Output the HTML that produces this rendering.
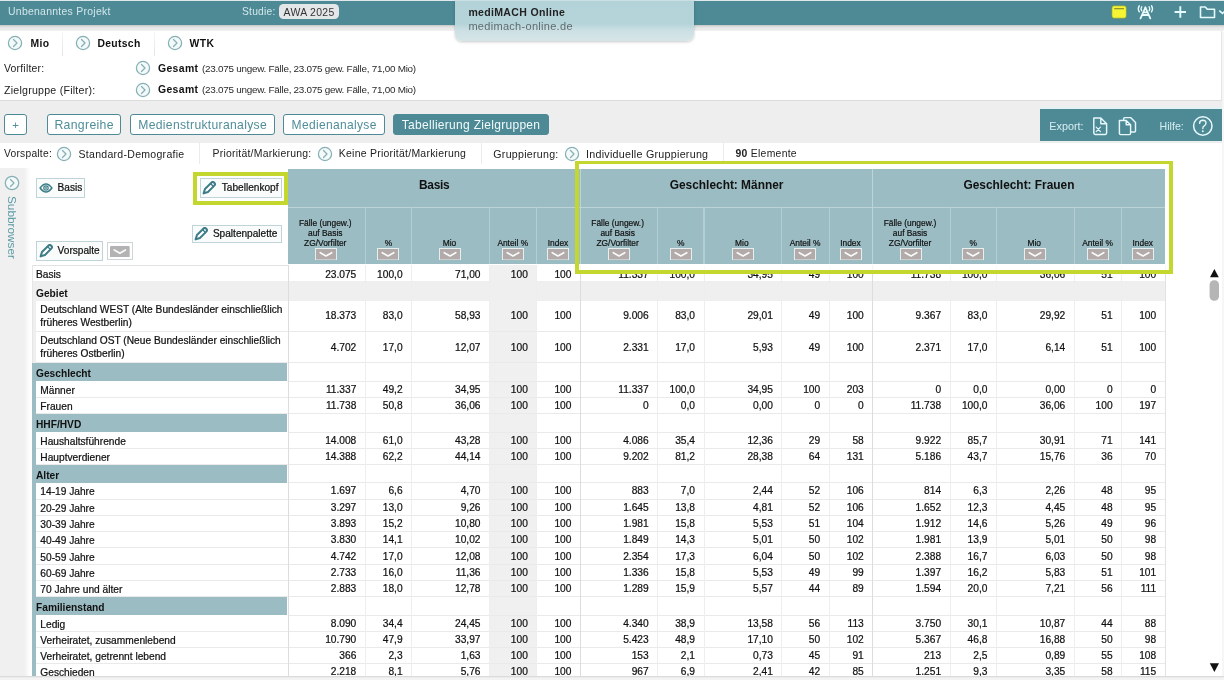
<!DOCTYPE html>
<html lang="de"><head><meta charset="utf-8"><title>mediMACH Online</title>
<style>
html,body{margin:0;padding:0}
body{width:1224px;height:680px;overflow:hidden;position:relative;background:#fff;font-family:"Liberation Sans",sans-serif;color:#222}
.abs{position:absolute}
.t{white-space:nowrap}
.btn{position:absolute;box-sizing:border-box;border:1px solid #4d8a96;border-radius:3px;background:#fff;color:#4f8e99;font-size:12.7px;text-align:center;white-space:nowrap}
.sbtn{position:absolute;box-sizing:border-box;border:1px solid #bfd4d8;background:#fafcfc}
.row{position:absolute;left:0;width:1224px}
.c{position:absolute;top:0;height:100%;text-align:right;font-size:10.2px;white-space:nowrap;color:#111;-webkit-text-stroke:0.22px #111}
.lab{position:absolute;top:0;height:100%;font-size:10.2px;white-space:nowrap;color:#111;-webkit-text-stroke:0.22px #111}
.vl{position:absolute;width:1px;background:#ededed}
.hl{position:absolute;height:1px;background:#eaeaea}
.hc{position:absolute;text-align:center;font-size:8.4px;line-height:10px;color:#111;-webkit-text-stroke:0.2px #111}
</style></head><body>
<div id="app" style="position:absolute;left:0;top:0;width:1224px;height:680px;will-change:transform">

<div class="abs" style="left:0;top:25px;width:1224px;height:6px;background:linear-gradient(#c4c4c4,#e4e4e4 35%,#f1f1f1)"></div>
<div class="abs" style="left:0;top:0;width:1224px;height:25px;background:#4d8a96;border-top:1px solid #dfe9eb;box-sizing:border-box"></div>
<span class="abs t " style="left:8px;top:2.4000000000000004px;line-height:20px;font-size:10.45px;color:#d3e7ea;letter-spacing:0.270px;">Unbenanntes Projekt</span>
<span class="abs t " style="left:242px;top:2.4000000000000004px;line-height:20px;font-size:10.26px;color:#d3e7ea;letter-spacing:0.240px;">Studie:</span>
<div class="abs" style="left:279px;top:4.4px;width:60px;height:14.2px;border-radius:4.5px;background:#e4e7e8"></div>
<span class="abs t " style="left:283.5px;top:2.5999999999999996px;line-height:20px;font-size:10.45px;color:#333;letter-spacing:0.320px;">AWA 2025</span>
<svg class="abs" style="left:1108px;top:2px" width="116" height="22" viewBox="0 0 116 22">
<rect x="3.9" y="3.8" width="14.4" height="12.4" rx="2.2" fill="#f5f534" stroke="#7d9440" stroke-width="0.6"/>
<rect x="6.2" y="6" width="9.8" height="1.3" fill="#8f9a2a"/>
<g fill="none" stroke="#eafcfd" stroke-linecap="round" stroke-linejoin="round">
<path d="M32.5,16.4 L37.4,5.5 L42.3,16.4 M35.3,10.4 H39.5 M34.2,13 H40.6" stroke-width="1.8"/>
<circle cx="37.4" cy="5.4" r="0.9" fill="#eafcfd" stroke="none"/>
<path d="M33.7,4.8 Q32.3,6.8 33.7,8.8 M31.3,3.7 Q29.3,6.8 31.3,9.9 M41.1,4.8 Q42.5,6.8 41.1,8.8 M43.5,3.7 Q45.5,6.8 43.5,9.9" stroke-width="1.35"/>
</g>
<path d="M72.3,4.3 V15.7 M66.6,10 H78" stroke="#e6fbfd" stroke-width="1.9" fill="none"/>
<path d="M92.5,5 H97.3 L99.3,7.3 H106.5 V15.5 H92.5 Z" fill="none" stroke="#e6fbfd" stroke-width="1.6" stroke-linejoin="round"/>
<path d="M111.3,8.6 L114.5,11.4 L117.7,8.6" fill="none" stroke="#e6fbfd" stroke-width="1.5"/>
</svg>
<div class="abs" style="left:0;top:31px;width:1221px;height:69px;background:#fff;border-right:1px solid #e6e6e6;border-bottom:1px solid #dcdcdc"></div>
<div class="abs" style="left:1222px;top:32px;width:2px;height:648px;background:#f6f6f6"></div>
<svg class="abs" style="left:7px;top:35px" width="16" height="16" viewBox="-8 -8 16 16"><circle r="6.6" fill="#f4fafa" stroke="#86b0b6" stroke-width="1.25"/><path d="M-1.5,-3.5 L2,0 L-1.5,3.5" fill="none" stroke="#86b0b6" stroke-width="1.25" stroke-linecap="round" stroke-linejoin="round" transform="rotate(0)"/></svg>
<span class="abs t " style="left:30.5px;top:33.9px;line-height:20px;font-size:10.36px;color:#111;font-weight:bold;letter-spacing:0.313px;">Mio</span>
<div class="abs" style="left:62px;top:32px;width:1px;height:24px;background:linear-gradient(#f6f6f6,#e4e4e4)"></div>
<svg class="abs" style="left:74.75px;top:35px" width="16" height="16" viewBox="-8 -8 16 16"><circle r="6.6" fill="#f4fafa" stroke="#86b0b6" stroke-width="1.25"/><path d="M-1.5,-3.5 L2,0 L-1.5,3.5" fill="none" stroke="#86b0b6" stroke-width="1.25" stroke-linecap="round" stroke-linejoin="round" transform="rotate(0)"/></svg>
<span class="abs t " style="left:97.5px;top:33.9px;line-height:20px;font-size:10.36px;color:#111;font-weight:bold;letter-spacing:0.307px;">Deutsch</span>
<div class="abs" style="left:154px;top:32px;width:1px;height:24px;background:linear-gradient(#f6f6f6,#e4e4e4)"></div>
<svg class="abs" style="left:166.5px;top:35px" width="16" height="16" viewBox="-8 -8 16 16"><circle r="6.6" fill="#f4fafa" stroke="#86b0b6" stroke-width="1.25"/><path d="M-1.5,-3.5 L2,0 L-1.5,3.5" fill="none" stroke="#86b0b6" stroke-width="1.25" stroke-linecap="round" stroke-linejoin="round" transform="rotate(0)"/></svg>
<span class="abs t " style="left:189.5px;top:33.9px;line-height:20px;font-size:10.36px;color:#111;font-weight:bold;letter-spacing:0.414px;">WTK</span>
<span class="abs t " style="left:4px;top:59.099999999999994px;line-height:20px;font-size:10.45px;color:#222;letter-spacing:0.202px;">Vorfilter:</span>
<svg class="abs" style="left:135px;top:60.3px" width="16" height="16" viewBox="-8 -8 16 16"><circle r="6.6" fill="#f4fafa" stroke="#86b0b6" stroke-width="1.25"/><path d="M-1.5,-3.5 L2,0 L-1.5,3.5" fill="none" stroke="#86b0b6" stroke-width="1.25" stroke-linecap="round" stroke-linejoin="round" transform="rotate(0)"/></svg>
<span class="abs t " style="left:158px;top:58.900000000000006px;line-height:20px;font-size:10.45px;color:#111;font-weight:bold;letter-spacing:0.336px;">Gesamt</span>
<span class="abs t " style="left:202px;top:59.099999999999994px;line-height:20px;font-size:9.90px;color:#2a2a2a;letter-spacing:-0.252px;">(23.075 ungew. Fälle, 23.075 gew. Fälle, 71,00 Mio)</span>
<span class="abs t " style="left:4px;top:80.1px;line-height:20px;font-size:10.64px;color:#222;letter-spacing:0.229px;">Zielgruppe (Filter):</span>
<svg class="abs" style="left:135px;top:81.6px" width="16" height="16" viewBox="-8 -8 16 16"><circle r="6.6" fill="#f4fafa" stroke="#86b0b6" stroke-width="1.25"/><path d="M-1.5,-3.5 L2,0 L-1.5,3.5" fill="none" stroke="#86b0b6" stroke-width="1.25" stroke-linecap="round" stroke-linejoin="round" transform="rotate(0)"/></svg>
<span class="abs t " style="left:158px;top:80.1px;line-height:20px;font-size:10.45px;color:#111;font-weight:bold;letter-spacing:0.336px;">Gesamt</span>
<span class="abs t " style="left:202px;top:80.3px;line-height:20px;font-size:9.90px;color:#2a2a2a;letter-spacing:-0.252px;">(23.075 ungew. Fälle, 23.075 gew. Fälle, 71,00 Mio)</span>
<div class="abs" style="left:455px;top:0;width:239px;height:41px;border-radius:0 0 7px 7px;background:linear-gradient(#d5e6e9 0,#b3d3d9 1.5px,#b5d4da 24px,#cbdfe3 30px,#d6e6e8 41px);box-shadow:0 1px 3px rgba(0,0,0,.22)"></div>
<span class="abs t " style="left:468.4px;top:2.3000000000000007px;line-height:20px;font-size:10.54px;color:#222;font-weight:bold;letter-spacing:0.323px;">mediMACH Online</span>
<span class="abs t " style="left:468.4px;top:15.8px;line-height:20px;font-size:11.02px;color:#5f6b6e;letter-spacing:0.290px;">medimach-online.de</span>
<div class="abs" style="left:0;top:101px;width:1222px;height:41.5px;background:#eeeeee"></div>
<div class="btn" style="left:4px;top:114.3px;width:23px;height:20.4px;line-height:20px;font-size:11.40px;letter-spacing:0.350px;text-indent:0.350px;">+</div>
<div class="btn" style="left:47px;top:114.3px;width:74px;height:20.4px;line-height:20px;font-size:12.25px;letter-spacing:0.331px;text-indent:0.331px;">Rangreihe</div>
<div class="btn" style="left:130px;top:114.3px;width:145px;height:20.4px;line-height:20px;font-size:12.16px;letter-spacing:0.307px;text-indent:0.307px;">Medienstrukturanalyse</div>
<div class="btn" style="left:283px;top:114.3px;width:102px;height:20.4px;line-height:20px;font-size:12.02px;letter-spacing:0.327px;text-indent:0.327px;">Medienanalyse</div>
<div class="btn" style="left:393px;top:114.3px;width:155.79999999999995px;height:20.4px;line-height:20px;font-size:12.02px;letter-spacing:0.289px;text-indent:0.289px;background:#4d8a96;color:#f2fafb;">Tabellierung Zielgruppen</div>
<div class="abs" style="left:1040.3px;top:107.2px;width:181.5px;height:2px;background:#e3f2f4"></div>
<div class="abs" style="left:1040.3px;top:109.2px;width:181.5px;height:32.3px;background:#4d8a96"></div>
<span class="abs t " style="left:1049.3px;top:116.0px;line-height:20px;font-size:10.80px;color:#d8eef2;">Export:</span>
<span class="abs t " style="left:1159.6px;top:116.0px;line-height:20px;font-size:10.60px;color:#d8eef2;">Hilfe:</span>
<svg class="abs" style="left:1090px;top:114px" width="128" height="24" viewBox="0 0 128 24">
<g fill="none" stroke="#e6f8fb" stroke-width="1.45" stroke-linejoin="round" stroke-linecap="round">
<path d="M3.8,4 H10.8 L16.6,9.8 V19 Q16.6,20.4 15.2,20.4 H5.2 Q3.8,20.4 3.8,19 Z M10.8,4 V9.8 H16.6"/>
<path d="M6.2,13.2 L10.4,17.6 M10.4,13.2 L6.2,17.6" stroke-width="1.2"/>
<path d="M29.4,6.4 H36.2 L40.6,10.8 V19.3 Q40.6,20.6 39.3,20.6 H30.7 Q29.4,20.6 29.4,19.3 Z M36.2,6.4 V10.8 H40.6"/>
<path d="M33.6,6.2 V4.7 Q33.6,3.6 34.7,3.6 H40.6 L45.5,8.5 V16.9 Q45.5,18 44.4,18 H40.8"/>
<circle cx="112.8" cy="12" r="9.2" stroke-width="1.55"/>
<path d="M109.6,9.4 Q109.7,6.3 112.9,6.3 Q116.1,6.4 116,9.2 Q115.9,10.9 114.2,11.8 Q112.8,12.6 112.8,14.6" stroke-width="1.4"/>
</g><circle cx="112.8" cy="17.3" r="0.95" fill="#e6f8fb"/></svg>
<span class="abs t " style="left:4px;top:143.8px;line-height:20px;font-size:10.26px;color:#222;letter-spacing:0.240px;">Vorspalte:</span>
<svg class="abs" style="left:56px;top:145.60000000000002px" width="16" height="16" viewBox="-8 -8 16 16"><circle r="6.6" fill="#f4fafa" stroke="#86b0b6" stroke-width="1.25"/><path d="M-1.5,-3.5 L2,0 L-1.5,3.5" fill="none" stroke="#86b0b6" stroke-width="1.25" stroke-linecap="round" stroke-linejoin="round" transform="rotate(0)"/></svg>
<span class="abs t " style="left:78.5px;top:143.8px;line-height:20px;font-size:10.54px;color:#222;letter-spacing:0.279px;">Standard-Demografie</span>
<div class="abs" style="left:199px;top:143px;width:1px;height:21px;background:#ebebeb"></div>
<span class="abs t " style="left:212.5px;top:143.8px;line-height:20px;font-size:10.45px;color:#222;letter-spacing:0.236px;">Priorität/Markierung:</span>
<svg class="abs" style="left:317px;top:145.60000000000002px" width="16" height="16" viewBox="-8 -8 16 16"><circle r="6.6" fill="#f4fafa" stroke="#86b0b6" stroke-width="1.25"/><path d="M-1.5,-3.5 L2,0 L-1.5,3.5" fill="none" stroke="#86b0b6" stroke-width="1.25" stroke-linecap="round" stroke-linejoin="round" transform="rotate(0)"/></svg>
<span class="abs t " style="left:338.8px;top:143.8px;line-height:20px;font-size:10.48px;color:#222;letter-spacing:0.245px;">Keine Priorität/Markierung</span>
<div class="abs" style="left:480.5px;top:143px;width:1px;height:21px;background:#ebebeb"></div>
<span class="abs t " style="left:493.3px;top:143.8px;line-height:20px;font-size:10.64px;color:#222;letter-spacing:0.272px;">Gruppierung:</span>
<svg class="abs" style="left:563.5px;top:145.60000000000002px" width="16" height="16" viewBox="-8 -8 16 16"><circle r="6.6" fill="#f4fafa" stroke="#86b0b6" stroke-width="1.25"/><path d="M-1.5,-3.5 L2,0 L-1.5,3.5" fill="none" stroke="#86b0b6" stroke-width="1.25" stroke-linecap="round" stroke-linejoin="round" transform="rotate(0)"/></svg>
<span class="abs t " style="left:586px;top:143.8px;line-height:20px;font-size:10.73px;color:#222;letter-spacing:0.255px;">Individuelle Gruppierung</span>
<div class="abs" style="left:723px;top:143px;width:1px;height:21px;background:#ebebeb"></div>
<span class="abs t " style="left:735.5px;top:143.8px;line-height:20px;font-size:10.40px;color:#222;letter-spacing:0.279px;"><b>90</b> Elemente</span>
<div class="abs" style="left:0;top:168px;width:30px;height:512px;background:linear-gradient(90deg,#f0f0f0 0,#f0f0f0 24px,#f7f7f7 27px,#fff 30px)"></div>
<svg class="abs" style="left:4px;top:175.2px" width="16" height="16" viewBox="-8 -8 16 16"><circle r="6.7" fill="#f4fafa" stroke="#86b0b6" stroke-width="1.25"/><path d="M-1.5,-3.5 L2,0 L-1.5,3.5" fill="none" stroke="#86b0b6" stroke-width="1.25" stroke-linecap="round" stroke-linejoin="round" transform="rotate(0)"/></svg>
<span class="abs t" style="left:12.3px;top:195.5px;font-size:11.8px;line-height:14px;color:#5b9aa5;transform-origin:0 0;transform:rotate(90deg) translate(0,-7.4px)">Subbrowser</span>
<div class="sbtn" style="left:36px;top:178.4px;width:49px;height:19.299999999999983px"></div><svg class="abs" style="left:38.6px;top:182.2px" width="14" height="12" viewBox="0 0 14 12"><path d="M1.1,6 Q7,-2 12.9,6 Q7,14 1.1,6 Z" fill="#fff" stroke="#3d7c87" stroke-width="1.5" stroke-linejoin="round"/><circle cx="7" cy="6" r="2.2" fill="none" stroke="#3d7c87" stroke-width="1.2"/><circle cx="7" cy="6" r="0.9" fill="#3d7c87"/></svg><span class="abs t " style="left:57.6px;top:178.45000000000002px;line-height:20px;font-size:10.10px;color:#111;-webkit-text-stroke:0.22px #111;">Basis</span>
<div class="sbtn" style="left:36px;top:241.1px;width:66.7px;height:19.599999999999994px"></div><svg class="abs" style="left:38.5px;top:244.2px" width="14" height="14" viewBox="-7 -7 14 14"><g transform="rotate(45)" fill="#fff" stroke="#3d7c87" stroke-width="2" stroke-linejoin="round" stroke-linecap="round"><path d="M-2.1,-5.4 Q-2.1,-7.4 0,-7.4 Q2.1,-7.4 2.1,-5.4 L2.1,3.6 L0,7.6 L-2.1,3.6 Z"/><path d="M-2.1,-4.2 H2.1" stroke-width="1.3"/></g></svg><span class="abs t " style="left:57.6px;top:241.29999999999998px;line-height:20px;font-size:10.10px;color:#111;-webkit-text-stroke:0.22px #111;">Vorspalte</span>
<div class="sbtn" style="left:106.8px;top:242.1px;width:26px;height:17.6px;border-color:#cfd6d7;background:#fff"></div>
<svg class="abs" style="left:110px;top:245.6px" width="19.7" height="11.3" viewBox="0 0 19.7 11.3"><rect width="19.7" height="11.3" rx="1" fill="#b3b3b3"/><path d="M4.3,4 L9.85,7.3 L15.4,4" fill="none" stroke="#f8f8f8" stroke-width="1.7" stroke-linecap="round" stroke-linejoin="round"/></svg>
<div class="abs" style="left:192.8px;top:171.8px;width:95.5px;height:33px;box-sizing:border-box;border:4.1px solid #c4d72f"></div>
<div class="sbtn" style="left:199.8px;top:178.1px;width:81.80000000000001px;height:19.599999999999994px"></div><svg class="abs" style="left:202.4px;top:181.2px" width="14" height="14" viewBox="-7 -7 14 14"><g transform="rotate(45)" fill="#fff" stroke="#3d7c87" stroke-width="2" stroke-linejoin="round" stroke-linecap="round"><path d="M-2.1,-5.4 Q-2.1,-7.4 0,-7.4 Q2.1,-7.4 2.1,-5.4 L2.1,3.6 L0,7.6 L-2.1,3.6 Z"/><path d="M-2.1,-4.2 H2.1" stroke-width="1.3"/></g></svg><span class="abs t " style="left:221.8px;top:178.29999999999998px;line-height:20px;font-size:10.10px;color:#111;-webkit-text-stroke:0.22px #111;">Tabellenkopf</span>
<div class="sbtn" style="left:191.7px;top:224.5px;width:90.10000000000002px;height:18.80000000000001px"></div><svg class="abs" style="left:193.8px;top:227.1px" width="14" height="14" viewBox="-7 -7 14 14"><g transform="rotate(45)" fill="#fff" stroke="#3d7c87" stroke-width="2" stroke-linejoin="round" stroke-linecap="round"><path d="M-2.1,-5.4 Q-2.1,-7.4 0,-7.4 Q2.1,-7.4 2.1,-5.4 L2.1,3.6 L0,7.6 L-2.1,3.6 Z"/><path d="M-2.1,-4.2 H2.1" stroke-width="1.3"/></g></svg><span class="abs t " style="left:212.9px;top:224.3px;line-height:20px;font-size:10.10px;color:#111;-webkit-text-stroke:0.22px #111;">Spaltenpalette</span>
<div class="abs" style="left:288px;top:168.6px;width:877.3px;height:95.70000000000002px;background:#9bbcc3"></div>
<div class="abs" style="left:288px;top:206.7px;width:877.3px;height:1.2px;background:#bcd3d8"></div>
<span class="abs t" style="left:288px;top:174.6px;width:292.4px;text-align:center;font-size:11.9px;font-weight:bold;line-height:20px;color:#111;letter-spacing:-0.25px">Basis</span>
<div class="hc" style="left:286.6px;width:77.3px;top:217.8px">Fälle (ungew.)<br>auf Basis<br>ZG/Vorfilter</div>
<svg class="abs" style="left:315.34999999999997px;top:247.5px" width="22" height="12.5" viewBox="0 0 22 12.5"><rect x="0.5" y="0.5" width="21" height="11.5" fill="#b2abaa" stroke="#e6eff0" stroke-width="1"/><path d="M5.2,4.7 L11,8 L16.8,4.7" fill="none" stroke="#fafafa" stroke-width="1.6" stroke-linecap="round" stroke-linejoin="round"/></svg>
<div class="abs" style="left:364.7px;top:207px;width:1.2px;height:57.30000000000001px;background:#b4cfd4"></div>
<div class="hc" style="left:365.3px;width:46.3px;top:238px">%</div>
<svg class="abs" style="left:377.15px;top:247.5px" width="22" height="12.5" viewBox="0 0 22 12.5"><rect x="0.5" y="0.5" width="21" height="11.5" fill="#b2abaa" stroke="#e6eff0" stroke-width="1"/><path d="M5.2,4.7 L11,8 L16.8,4.7" fill="none" stroke="#fafafa" stroke-width="1.6" stroke-linecap="round" stroke-linejoin="round"/></svg>
<div class="abs" style="left:411.0px;top:207px;width:1.2px;height:57.30000000000001px;background:#b4cfd4"></div>
<div class="hc" style="left:410.5px;width:77.9px;top:238px">Mio</div>
<svg class="abs" style="left:439.25px;top:247.5px" width="22" height="12.5" viewBox="0 0 22 12.5"><rect x="0.5" y="0.5" width="21" height="11.5" fill="#b2abaa" stroke="#e6eff0" stroke-width="1"/><path d="M5.2,4.7 L11,8 L16.8,4.7" fill="none" stroke="#fafafa" stroke-width="1.6" stroke-linecap="round" stroke-linejoin="round"/></svg>
<div class="abs" style="left:488.9px;top:207px;width:1.2px;height:57.30000000000001px;background:#b4cfd4"></div>
<div class="hc" style="left:489.1px;width:47.3px;top:238px">Anteil %</div>
<svg class="abs" style="left:501.84999999999997px;top:247.5px" width="22" height="12.5" viewBox="0 0 22 12.5"><rect x="0.5" y="0.5" width="21" height="11.5" fill="#b2abaa" stroke="#e6eff0" stroke-width="1"/><path d="M5.2,4.7 L11,8 L16.8,4.7" fill="none" stroke="#fafafa" stroke-width="1.6" stroke-linecap="round" stroke-linejoin="round"/></svg>
<div class="abs" style="left:536.1999999999999px;top:207px;width:1.2px;height:57.30000000000001px;background:#b4cfd4"></div>
<div class="hc" style="left:536.1999999999999px;width:43.6px;top:238px">Index</div>
<svg class="abs" style="left:547.3px;top:247.5px" width="22" height="12.5" viewBox="0 0 22 12.5"><rect x="0.5" y="0.5" width="21" height="11.5" fill="#b2abaa" stroke="#e6eff0" stroke-width="1"/><path d="M5.2,4.7 L11,8 L16.8,4.7" fill="none" stroke="#fafafa" stroke-width="1.6" stroke-linecap="round" stroke-linejoin="round"/></svg>
<span class="abs t" style="left:580.4px;top:174.6px;width:292.4px;text-align:center;font-size:11.9px;font-weight:bold;line-height:20px;color:#111">Geschlecht: Männer</span>
<div class="abs" style="left:579.8px;top:168.6px;width:1.2px;height:95.70000000000002px;background:#bcd3d8"></div>
<div class="hc" style="left:579.0px;width:77.3px;top:217.8px">Fälle (ungew.)<br>auf Basis<br>ZG/Vorfilter</div>
<svg class="abs" style="left:607.75px;top:247.5px" width="22" height="12.5" viewBox="0 0 22 12.5"><rect x="0.5" y="0.5" width="21" height="11.5" fill="#b2abaa" stroke="#e6eff0" stroke-width="1"/><path d="M5.2,4.7 L11,8 L16.8,4.7" fill="none" stroke="#fafafa" stroke-width="1.6" stroke-linecap="round" stroke-linejoin="round"/></svg>
<div class="abs" style="left:657.0999999999999px;top:207px;width:1.2px;height:57.30000000000001px;background:#b4cfd4"></div>
<div class="hc" style="left:657.6999999999999px;width:46.3px;top:238px">%</div>
<svg class="abs" style="left:669.55px;top:247.5px" width="22" height="12.5" viewBox="0 0 22 12.5"><rect x="0.5" y="0.5" width="21" height="11.5" fill="#b2abaa" stroke="#e6eff0" stroke-width="1"/><path d="M5.2,4.7 L11,8 L16.8,4.7" fill="none" stroke="#fafafa" stroke-width="1.6" stroke-linecap="round" stroke-linejoin="round"/></svg>
<div class="abs" style="left:703.3999999999999px;top:207px;width:1.2px;height:57.30000000000001px;background:#b4cfd4"></div>
<div class="hc" style="left:702.8999999999999px;width:77.9px;top:238px">Mio</div>
<svg class="abs" style="left:731.65px;top:247.5px" width="22" height="12.5" viewBox="0 0 22 12.5"><rect x="0.5" y="0.5" width="21" height="11.5" fill="#b2abaa" stroke="#e6eff0" stroke-width="1"/><path d="M5.2,4.7 L11,8 L16.8,4.7" fill="none" stroke="#fafafa" stroke-width="1.6" stroke-linecap="round" stroke-linejoin="round"/></svg>
<div class="abs" style="left:781.2999999999998px;top:207px;width:1.2px;height:57.30000000000001px;background:#b4cfd4"></div>
<div class="hc" style="left:781.4999999999999px;width:47.3px;top:238px">Anteil %</div>
<svg class="abs" style="left:794.2499999999999px;top:247.5px" width="22" height="12.5" viewBox="0 0 22 12.5"><rect x="0.5" y="0.5" width="21" height="11.5" fill="#b2abaa" stroke="#e6eff0" stroke-width="1"/><path d="M5.2,4.7 L11,8 L16.8,4.7" fill="none" stroke="#fafafa" stroke-width="1.6" stroke-linecap="round" stroke-linejoin="round"/></svg>
<div class="abs" style="left:828.5999999999998px;top:207px;width:1.2px;height:57.30000000000001px;background:#b4cfd4"></div>
<div class="hc" style="left:828.5999999999998px;width:43.6px;top:238px">Index</div>
<svg class="abs" style="left:839.6999999999998px;top:247.5px" width="22" height="12.5" viewBox="0 0 22 12.5"><rect x="0.5" y="0.5" width="21" height="11.5" fill="#b2abaa" stroke="#e6eff0" stroke-width="1"/><path d="M5.2,4.7 L11,8 L16.8,4.7" fill="none" stroke="#fafafa" stroke-width="1.6" stroke-linecap="round" stroke-linejoin="round"/></svg>
<span class="abs t" style="left:872.8px;top:174.6px;width:292.4px;text-align:center;font-size:11.9px;font-weight:bold;line-height:20px;color:#111">Geschlecht: Frauen</span>
<div class="abs" style="left:872.1999999999999px;top:168.6px;width:1.2px;height:95.70000000000002px;background:#bcd3d8"></div>
<div class="hc" style="left:871.4px;width:77.3px;top:217.8px">Fälle (ungew.)<br>auf Basis<br>ZG/Vorfilter</div>
<svg class="abs" style="left:900.15px;top:247.5px" width="22" height="12.5" viewBox="0 0 22 12.5"><rect x="0.5" y="0.5" width="21" height="11.5" fill="#b2abaa" stroke="#e6eff0" stroke-width="1"/><path d="M5.2,4.7 L11,8 L16.8,4.7" fill="none" stroke="#fafafa" stroke-width="1.6" stroke-linecap="round" stroke-linejoin="round"/></svg>
<div class="abs" style="left:949.4999999999999px;top:207px;width:1.2px;height:57.30000000000001px;background:#b4cfd4"></div>
<div class="hc" style="left:950.0999999999999px;width:46.3px;top:238px">%</div>
<svg class="abs" style="left:961.9499999999999px;top:247.5px" width="22" height="12.5" viewBox="0 0 22 12.5"><rect x="0.5" y="0.5" width="21" height="11.5" fill="#b2abaa" stroke="#e6eff0" stroke-width="1"/><path d="M5.2,4.7 L11,8 L16.8,4.7" fill="none" stroke="#fafafa" stroke-width="1.6" stroke-linecap="round" stroke-linejoin="round"/></svg>
<div class="abs" style="left:995.7999999999998px;top:207px;width:1.2px;height:57.30000000000001px;background:#b4cfd4"></div>
<div class="hc" style="left:995.2999999999998px;width:77.9px;top:238px">Mio</div>
<svg class="abs" style="left:1024.05px;top:247.5px" width="22" height="12.5" viewBox="0 0 22 12.5"><rect x="0.5" y="0.5" width="21" height="11.5" fill="#b2abaa" stroke="#e6eff0" stroke-width="1"/><path d="M5.2,4.7 L11,8 L16.8,4.7" fill="none" stroke="#fafafa" stroke-width="1.6" stroke-linecap="round" stroke-linejoin="round"/></svg>
<div class="abs" style="left:1073.7px;top:207px;width:1.2px;height:57.30000000000001px;background:#b4cfd4"></div>
<div class="hc" style="left:1073.8999999999999px;width:47.3px;top:238px">Anteil %</div>
<svg class="abs" style="left:1086.65px;top:247.5px" width="22" height="12.5" viewBox="0 0 22 12.5"><rect x="0.5" y="0.5" width="21" height="11.5" fill="#b2abaa" stroke="#e6eff0" stroke-width="1"/><path d="M5.2,4.7 L11,8 L16.8,4.7" fill="none" stroke="#fafafa" stroke-width="1.6" stroke-linecap="round" stroke-linejoin="round"/></svg>
<div class="abs" style="left:1121.0px;top:207px;width:1.2px;height:57.30000000000001px;background:#b4cfd4"></div>
<div class="hc" style="left:1121.0px;width:43.6px;top:238px">Index</div>
<svg class="abs" style="left:1132.1px;top:247.5px" width="22" height="12.5" viewBox="0 0 22 12.5"><rect x="0.5" y="0.5" width="21" height="11.5" fill="#b2abaa" stroke="#e6eff0" stroke-width="1"/><path d="M5.2,4.7 L11,8 L16.8,4.7" fill="none" stroke="#fafafa" stroke-width="1.6" stroke-linecap="round" stroke-linejoin="round"/></svg>
<div class="abs" style="left:489.5px;top:265px;width:47.3px;height:415px;background:#f0f0f0"></div>
<div class="hl" style="left:32px;top:264.6px;width:256px;background:#e2e2e2"></div>
<div class="row" style="top:265.00px;height:16.27px;line-height:16.27px"><span class="lab" style="left:36px;top:2.3px">Basis</span><span class="c" style="left:288px;width:68.3px;top:1.5px">23.075</span><span class="c" style="left:365.3px;width:37.3px;top:1.5px">100,0</span><span class="c" style="left:411.6px;width:68.9px;top:1.5px">71,00</span><span class="c" style="left:489.5px;width:38.3px;top:1.5px">100</span><span class="c" style="left:536.8px;width:34.6px;top:1.5px">100</span><span class="c" style="left:580.4px;width:68.3px;top:1.5px">11.337</span><span class="c" style="left:657.6999999999999px;width:37.3px;top:1.5px">100,0</span><span class="c" style="left:703.9999999999999px;width:68.9px;top:1.5px">34,95</span><span class="c" style="left:781.8999999999999px;width:38.3px;top:1.5px">49</span><span class="c" style="left:829.1999999999998px;width:34.6px;top:1.5px">100</span><span class="c" style="left:872.8px;width:68.3px;top:1.5px">11.738</span><span class="c" style="left:950.0999999999999px;width:37.3px;top:1.5px">100,0</span><span class="c" style="left:996.3999999999999px;width:68.9px;top:1.5px">36,06</span><span class="c" style="left:1074.3px;width:38.3px;top:1.5px">51</span><span class="c" style="left:1121.6px;width:34.6px;top:1.5px">100</span></div>
<div class="hl" style="left:32px;top:280.77px;width:1133.3px"></div>
<div class="row" style="top:281.27px;height:19.33px;line-height:19.33px"><div class="abs" style="left:32px;top:0;width:1133.3px;height:100%;background:#efefef"></div><span class="lab" style="left:36px;font-weight:bold;-webkit-text-stroke:0;top:2.3px">Gebiet</span></div>
<div class="row" style="top:300.60px;height:30.7px;line-height:30.7px"><span class="lab" style="left:40.3px;line-height:13px;top:2.65px">Deutschland WEST (Alte Bundesländer einschließlich<br>früheres Westberlin)</span><span class="c" style="left:288px;width:68.3px;top:0.6px">18.373</span><span class="c" style="left:365.3px;width:37.3px;top:0.6px">83,0</span><span class="c" style="left:411.6px;width:68.9px;top:0.6px">58,93</span><span class="c" style="left:489.5px;width:38.3px;top:0.6px">100</span><span class="c" style="left:536.8px;width:34.6px;top:0.6px">100</span><span class="c" style="left:580.4px;width:68.3px;top:0.6px">9.006</span><span class="c" style="left:657.6999999999999px;width:37.3px;top:0.6px">83,0</span><span class="c" style="left:703.9999999999999px;width:68.9px;top:0.6px">29,01</span><span class="c" style="left:781.8999999999999px;width:38.3px;top:0.6px">49</span><span class="c" style="left:829.1999999999998px;width:34.6px;top:0.6px">100</span><span class="c" style="left:872.8px;width:68.3px;top:0.6px">9.367</span><span class="c" style="left:950.0999999999999px;width:37.3px;top:0.6px">83,0</span><span class="c" style="left:996.3999999999999px;width:68.9px;top:0.6px">29,92</span><span class="c" style="left:1074.3px;width:38.3px;top:0.6px">51</span><span class="c" style="left:1121.6px;width:34.6px;top:0.6px">100</span></div>
<div class="hl" style="left:36px;top:330.80px;width:1129.3px"></div>
<div class="row" style="top:331.30px;height:31.6px;line-height:31.6px"><span class="lab" style="left:40.3px;line-height:13px;top:3.10px">Deutschland OST (Neue Bundesländer einschließlich<br>früheres Ostberlin)</span><span class="c" style="left:288px;width:68.3px;top:0.6px">4.702</span><span class="c" style="left:365.3px;width:37.3px;top:0.6px">17,0</span><span class="c" style="left:411.6px;width:68.9px;top:0.6px">12,07</span><span class="c" style="left:489.5px;width:38.3px;top:0.6px">100</span><span class="c" style="left:536.8px;width:34.6px;top:0.6px">100</span><span class="c" style="left:580.4px;width:68.3px;top:0.6px">2.331</span><span class="c" style="left:657.6999999999999px;width:37.3px;top:0.6px">17,0</span><span class="c" style="left:703.9999999999999px;width:68.9px;top:0.6px">5,93</span><span class="c" style="left:781.8999999999999px;width:38.3px;top:0.6px">49</span><span class="c" style="left:829.1999999999998px;width:34.6px;top:0.6px">100</span><span class="c" style="left:872.8px;width:68.3px;top:0.6px">2.371</span><span class="c" style="left:950.0999999999999px;width:37.3px;top:0.6px">17,0</span><span class="c" style="left:996.3999999999999px;width:68.9px;top:0.6px">6,14</span><span class="c" style="left:1074.3px;width:38.3px;top:0.6px">51</span><span class="c" style="left:1121.6px;width:34.6px;top:0.6px">100</span></div>
<div class="hl" style="left:36px;top:362.40px;width:1129.3px"></div>
<div class="row" style="top:362.90px;height:18.3px;line-height:18.3px"><div class="abs" style="left:32px;top:0;width:255.2px;height:100%;background:#9bbcc3"></div><span class="lab" style="left:36px;font-weight:bold;color:#111;-webkit-text-stroke:0;top:2.3px">Geschlecht</span></div>
<div class="hl" style="left:288px;top:380.70px;width:877.3px"></div>
<div class="row" style="top:381.20px;height:16.27px;line-height:16.27px"><span class="lab" style="left:40.3px;top:1.6px">Männer</span><span class="c" style="left:288px;width:68.3px;top:0.6px">11.337</span><span class="c" style="left:365.3px;width:37.3px;top:0.6px">49,2</span><span class="c" style="left:411.6px;width:68.9px;top:0.6px">34,95</span><span class="c" style="left:489.5px;width:38.3px;top:0.6px">100</span><span class="c" style="left:536.8px;width:34.6px;top:0.6px">100</span><span class="c" style="left:580.4px;width:68.3px;top:0.6px">11.337</span><span class="c" style="left:657.6999999999999px;width:37.3px;top:0.6px">100,0</span><span class="c" style="left:703.9999999999999px;width:68.9px;top:0.6px">34,95</span><span class="c" style="left:781.8999999999999px;width:38.3px;top:0.6px">100</span><span class="c" style="left:829.1999999999998px;width:34.6px;top:0.6px">203</span><span class="c" style="left:872.8px;width:68.3px;top:0.6px">0</span><span class="c" style="left:950.0999999999999px;width:37.3px;top:0.6px">0,0</span><span class="c" style="left:996.3999999999999px;width:68.9px;top:0.6px">0,00</span><span class="c" style="left:1074.3px;width:38.3px;top:0.6px">0</span><span class="c" style="left:1121.6px;width:34.6px;top:0.6px">0</span></div>
<div class="hl" style="left:36px;top:396.97px;width:1129.3px"></div>
<div class="row" style="top:397.47px;height:16.27px;line-height:16.27px"><span class="lab" style="left:40.3px;top:1.6px">Frauen</span><span class="c" style="left:288px;width:68.3px;top:0.6px">11.738</span><span class="c" style="left:365.3px;width:37.3px;top:0.6px">50,8</span><span class="c" style="left:411.6px;width:68.9px;top:0.6px">36,06</span><span class="c" style="left:489.5px;width:38.3px;top:0.6px">100</span><span class="c" style="left:536.8px;width:34.6px;top:0.6px">100</span><span class="c" style="left:580.4px;width:68.3px;top:0.6px">0</span><span class="c" style="left:657.6999999999999px;width:37.3px;top:0.6px">0,0</span><span class="c" style="left:703.9999999999999px;width:68.9px;top:0.6px">0,00</span><span class="c" style="left:781.8999999999999px;width:38.3px;top:0.6px">0</span><span class="c" style="left:829.1999999999998px;width:34.6px;top:0.6px">0</span><span class="c" style="left:872.8px;width:68.3px;top:0.6px">11.738</span><span class="c" style="left:950.0999999999999px;width:37.3px;top:0.6px">100,0</span><span class="c" style="left:996.3999999999999px;width:68.9px;top:0.6px">36,06</span><span class="c" style="left:1074.3px;width:38.3px;top:0.6px">100</span><span class="c" style="left:1121.6px;width:34.6px;top:0.6px">197</span></div>
<div class="hl" style="left:36px;top:413.24px;width:1129.3px"></div>
<div class="row" style="top:413.74px;height:18.3px;line-height:18.3px"><div class="abs" style="left:32px;top:0;width:255.2px;height:100%;background:#9bbcc3"></div><span class="lab" style="left:36px;font-weight:bold;color:#111;-webkit-text-stroke:0;top:2.3px">HHF/HVD</span></div>
<div class="hl" style="left:288px;top:431.54px;width:877.3px"></div>
<div class="row" style="top:432.04px;height:16.27px;line-height:16.27px"><span class="lab" style="left:40.3px;top:1.6px">Haushaltsführende</span><span class="c" style="left:288px;width:68.3px;top:0.6px">14.008</span><span class="c" style="left:365.3px;width:37.3px;top:0.6px">61,0</span><span class="c" style="left:411.6px;width:68.9px;top:0.6px">43,28</span><span class="c" style="left:489.5px;width:38.3px;top:0.6px">100</span><span class="c" style="left:536.8px;width:34.6px;top:0.6px">100</span><span class="c" style="left:580.4px;width:68.3px;top:0.6px">4.086</span><span class="c" style="left:657.6999999999999px;width:37.3px;top:0.6px">35,4</span><span class="c" style="left:703.9999999999999px;width:68.9px;top:0.6px">12,36</span><span class="c" style="left:781.8999999999999px;width:38.3px;top:0.6px">29</span><span class="c" style="left:829.1999999999998px;width:34.6px;top:0.6px">58</span><span class="c" style="left:872.8px;width:68.3px;top:0.6px">9.922</span><span class="c" style="left:950.0999999999999px;width:37.3px;top:0.6px">85,7</span><span class="c" style="left:996.3999999999999px;width:68.9px;top:0.6px">30,91</span><span class="c" style="left:1074.3px;width:38.3px;top:0.6px">71</span><span class="c" style="left:1121.6px;width:34.6px;top:0.6px">141</span></div>
<div class="hl" style="left:36px;top:447.81px;width:1129.3px"></div>
<div class="row" style="top:448.31px;height:16.27px;line-height:16.27px"><span class="lab" style="left:40.3px;top:1.6px">Hauptverdiener</span><span class="c" style="left:288px;width:68.3px;top:0.6px">14.388</span><span class="c" style="left:365.3px;width:37.3px;top:0.6px">62,2</span><span class="c" style="left:411.6px;width:68.9px;top:0.6px">44,14</span><span class="c" style="left:489.5px;width:38.3px;top:0.6px">100</span><span class="c" style="left:536.8px;width:34.6px;top:0.6px">100</span><span class="c" style="left:580.4px;width:68.3px;top:0.6px">9.202</span><span class="c" style="left:657.6999999999999px;width:37.3px;top:0.6px">81,2</span><span class="c" style="left:703.9999999999999px;width:68.9px;top:0.6px">28,38</span><span class="c" style="left:781.8999999999999px;width:38.3px;top:0.6px">64</span><span class="c" style="left:829.1999999999998px;width:34.6px;top:0.6px">131</span><span class="c" style="left:872.8px;width:68.3px;top:0.6px">5.186</span><span class="c" style="left:950.0999999999999px;width:37.3px;top:0.6px">43,7</span><span class="c" style="left:996.3999999999999px;width:68.9px;top:0.6px">15,76</span><span class="c" style="left:1074.3px;width:38.3px;top:0.6px">36</span><span class="c" style="left:1121.6px;width:34.6px;top:0.6px">70</span></div>
<div class="hl" style="left:36px;top:464.08px;width:1129.3px"></div>
<div class="row" style="top:464.58px;height:18.3px;line-height:18.3px"><div class="abs" style="left:32px;top:0;width:255.2px;height:100%;background:#9bbcc3"></div><span class="lab" style="left:36px;font-weight:bold;color:#111;-webkit-text-stroke:0;top:2.3px">Alter</span></div>
<div class="hl" style="left:288px;top:482.38px;width:877.3px"></div>
<div class="row" style="top:482.88px;height:16.27px;line-height:16.27px"><span class="lab" style="left:40.3px;top:1.6px">14-19 Jahre</span><span class="c" style="left:288px;width:68.3px;top:0.6px">1.697</span><span class="c" style="left:365.3px;width:37.3px;top:0.6px">6,6</span><span class="c" style="left:411.6px;width:68.9px;top:0.6px">4,70</span><span class="c" style="left:489.5px;width:38.3px;top:0.6px">100</span><span class="c" style="left:536.8px;width:34.6px;top:0.6px">100</span><span class="c" style="left:580.4px;width:68.3px;top:0.6px">883</span><span class="c" style="left:657.6999999999999px;width:37.3px;top:0.6px">7,0</span><span class="c" style="left:703.9999999999999px;width:68.9px;top:0.6px">2,44</span><span class="c" style="left:781.8999999999999px;width:38.3px;top:0.6px">52</span><span class="c" style="left:829.1999999999998px;width:34.6px;top:0.6px">106</span><span class="c" style="left:872.8px;width:68.3px;top:0.6px">814</span><span class="c" style="left:950.0999999999999px;width:37.3px;top:0.6px">6,3</span><span class="c" style="left:996.3999999999999px;width:68.9px;top:0.6px">2,26</span><span class="c" style="left:1074.3px;width:38.3px;top:0.6px">48</span><span class="c" style="left:1121.6px;width:34.6px;top:0.6px">95</span></div>
<div class="hl" style="left:36px;top:498.65px;width:1129.3px"></div>
<div class="row" style="top:499.15px;height:16.27px;line-height:16.27px"><span class="lab" style="left:40.3px;top:1.6px">20-29 Jahre</span><span class="c" style="left:288px;width:68.3px;top:0.6px">3.297</span><span class="c" style="left:365.3px;width:37.3px;top:0.6px">13,0</span><span class="c" style="left:411.6px;width:68.9px;top:0.6px">9,26</span><span class="c" style="left:489.5px;width:38.3px;top:0.6px">100</span><span class="c" style="left:536.8px;width:34.6px;top:0.6px">100</span><span class="c" style="left:580.4px;width:68.3px;top:0.6px">1.645</span><span class="c" style="left:657.6999999999999px;width:37.3px;top:0.6px">13,8</span><span class="c" style="left:703.9999999999999px;width:68.9px;top:0.6px">4,81</span><span class="c" style="left:781.8999999999999px;width:38.3px;top:0.6px">52</span><span class="c" style="left:829.1999999999998px;width:34.6px;top:0.6px">106</span><span class="c" style="left:872.8px;width:68.3px;top:0.6px">1.652</span><span class="c" style="left:950.0999999999999px;width:37.3px;top:0.6px">12,3</span><span class="c" style="left:996.3999999999999px;width:68.9px;top:0.6px">4,45</span><span class="c" style="left:1074.3px;width:38.3px;top:0.6px">48</span><span class="c" style="left:1121.6px;width:34.6px;top:0.6px">95</span></div>
<div class="hl" style="left:36px;top:514.92px;width:1129.3px"></div>
<div class="row" style="top:515.42px;height:16.27px;line-height:16.27px"><span class="lab" style="left:40.3px;top:1.6px">30-39 Jahre</span><span class="c" style="left:288px;width:68.3px;top:0.6px">3.893</span><span class="c" style="left:365.3px;width:37.3px;top:0.6px">15,2</span><span class="c" style="left:411.6px;width:68.9px;top:0.6px">10,80</span><span class="c" style="left:489.5px;width:38.3px;top:0.6px">100</span><span class="c" style="left:536.8px;width:34.6px;top:0.6px">100</span><span class="c" style="left:580.4px;width:68.3px;top:0.6px">1.981</span><span class="c" style="left:657.6999999999999px;width:37.3px;top:0.6px">15,8</span><span class="c" style="left:703.9999999999999px;width:68.9px;top:0.6px">5,53</span><span class="c" style="left:781.8999999999999px;width:38.3px;top:0.6px">51</span><span class="c" style="left:829.1999999999998px;width:34.6px;top:0.6px">104</span><span class="c" style="left:872.8px;width:68.3px;top:0.6px">1.912</span><span class="c" style="left:950.0999999999999px;width:37.3px;top:0.6px">14,6</span><span class="c" style="left:996.3999999999999px;width:68.9px;top:0.6px">5,26</span><span class="c" style="left:1074.3px;width:38.3px;top:0.6px">49</span><span class="c" style="left:1121.6px;width:34.6px;top:0.6px">96</span></div>
<div class="hl" style="left:36px;top:531.19px;width:1129.3px"></div>
<div class="row" style="top:531.69px;height:16.27px;line-height:16.27px"><span class="lab" style="left:40.3px;top:1.6px">40-49 Jahre</span><span class="c" style="left:288px;width:68.3px;top:0.6px">3.830</span><span class="c" style="left:365.3px;width:37.3px;top:0.6px">14,1</span><span class="c" style="left:411.6px;width:68.9px;top:0.6px">10,02</span><span class="c" style="left:489.5px;width:38.3px;top:0.6px">100</span><span class="c" style="left:536.8px;width:34.6px;top:0.6px">100</span><span class="c" style="left:580.4px;width:68.3px;top:0.6px">1.849</span><span class="c" style="left:657.6999999999999px;width:37.3px;top:0.6px">14,3</span><span class="c" style="left:703.9999999999999px;width:68.9px;top:0.6px">5,01</span><span class="c" style="left:781.8999999999999px;width:38.3px;top:0.6px">50</span><span class="c" style="left:829.1999999999998px;width:34.6px;top:0.6px">102</span><span class="c" style="left:872.8px;width:68.3px;top:0.6px">1.981</span><span class="c" style="left:950.0999999999999px;width:37.3px;top:0.6px">13,9</span><span class="c" style="left:996.3999999999999px;width:68.9px;top:0.6px">5,01</span><span class="c" style="left:1074.3px;width:38.3px;top:0.6px">50</span><span class="c" style="left:1121.6px;width:34.6px;top:0.6px">98</span></div>
<div class="hl" style="left:36px;top:547.46px;width:1129.3px"></div>
<div class="row" style="top:547.96px;height:16.27px;line-height:16.27px"><span class="lab" style="left:40.3px;top:1.6px">50-59 Jahre</span><span class="c" style="left:288px;width:68.3px;top:0.6px">4.742</span><span class="c" style="left:365.3px;width:37.3px;top:0.6px">17,0</span><span class="c" style="left:411.6px;width:68.9px;top:0.6px">12,08</span><span class="c" style="left:489.5px;width:38.3px;top:0.6px">100</span><span class="c" style="left:536.8px;width:34.6px;top:0.6px">100</span><span class="c" style="left:580.4px;width:68.3px;top:0.6px">2.354</span><span class="c" style="left:657.6999999999999px;width:37.3px;top:0.6px">17,3</span><span class="c" style="left:703.9999999999999px;width:68.9px;top:0.6px">6,04</span><span class="c" style="left:781.8999999999999px;width:38.3px;top:0.6px">50</span><span class="c" style="left:829.1999999999998px;width:34.6px;top:0.6px">102</span><span class="c" style="left:872.8px;width:68.3px;top:0.6px">2.388</span><span class="c" style="left:950.0999999999999px;width:37.3px;top:0.6px">16,7</span><span class="c" style="left:996.3999999999999px;width:68.9px;top:0.6px">6,03</span><span class="c" style="left:1074.3px;width:38.3px;top:0.6px">50</span><span class="c" style="left:1121.6px;width:34.6px;top:0.6px">98</span></div>
<div class="hl" style="left:36px;top:563.73px;width:1129.3px"></div>
<div class="row" style="top:564.23px;height:16.27px;line-height:16.27px"><span class="lab" style="left:40.3px;top:1.6px">60-69 Jahre</span><span class="c" style="left:288px;width:68.3px;top:0.6px">2.733</span><span class="c" style="left:365.3px;width:37.3px;top:0.6px">16,0</span><span class="c" style="left:411.6px;width:68.9px;top:0.6px">11,36</span><span class="c" style="left:489.5px;width:38.3px;top:0.6px">100</span><span class="c" style="left:536.8px;width:34.6px;top:0.6px">100</span><span class="c" style="left:580.4px;width:68.3px;top:0.6px">1.336</span><span class="c" style="left:657.6999999999999px;width:37.3px;top:0.6px">15,8</span><span class="c" style="left:703.9999999999999px;width:68.9px;top:0.6px">5,53</span><span class="c" style="left:781.8999999999999px;width:38.3px;top:0.6px">49</span><span class="c" style="left:829.1999999999998px;width:34.6px;top:0.6px">99</span><span class="c" style="left:872.8px;width:68.3px;top:0.6px">1.397</span><span class="c" style="left:950.0999999999999px;width:37.3px;top:0.6px">16,2</span><span class="c" style="left:996.3999999999999px;width:68.9px;top:0.6px">5,83</span><span class="c" style="left:1074.3px;width:38.3px;top:0.6px">51</span><span class="c" style="left:1121.6px;width:34.6px;top:0.6px">101</span></div>
<div class="hl" style="left:36px;top:580.00px;width:1129.3px"></div>
<div class="row" style="top:580.50px;height:16.27px;line-height:16.27px"><span class="lab" style="left:40.3px;top:1.6px">70 Jahre und älter</span><span class="c" style="left:288px;width:68.3px;top:0.6px">2.883</span><span class="c" style="left:365.3px;width:37.3px;top:0.6px">18,0</span><span class="c" style="left:411.6px;width:68.9px;top:0.6px">12,78</span><span class="c" style="left:489.5px;width:38.3px;top:0.6px">100</span><span class="c" style="left:536.8px;width:34.6px;top:0.6px">100</span><span class="c" style="left:580.4px;width:68.3px;top:0.6px">1.289</span><span class="c" style="left:657.6999999999999px;width:37.3px;top:0.6px">15,9</span><span class="c" style="left:703.9999999999999px;width:68.9px;top:0.6px">5,57</span><span class="c" style="left:781.8999999999999px;width:38.3px;top:0.6px">44</span><span class="c" style="left:829.1999999999998px;width:34.6px;top:0.6px">89</span><span class="c" style="left:872.8px;width:68.3px;top:0.6px">1.594</span><span class="c" style="left:950.0999999999999px;width:37.3px;top:0.6px">20,0</span><span class="c" style="left:996.3999999999999px;width:68.9px;top:0.6px">7,21</span><span class="c" style="left:1074.3px;width:38.3px;top:0.6px">56</span><span class="c" style="left:1121.6px;width:34.6px;top:0.6px">111</span></div>
<div class="hl" style="left:36px;top:596.27px;width:1129.3px"></div>
<div class="row" style="top:596.77px;height:18.3px;line-height:18.3px"><div class="abs" style="left:32px;top:0;width:255.2px;height:100%;background:#9bbcc3"></div><span class="lab" style="left:36px;font-weight:bold;color:#111;-webkit-text-stroke:0;top:2.3px">Familienstand</span></div>
<div class="hl" style="left:288px;top:614.57px;width:877.3px"></div>
<div class="row" style="top:615.07px;height:16.27px;line-height:16.27px"><span class="lab" style="left:40.3px;top:1.6px">Ledig</span><span class="c" style="left:288px;width:68.3px;top:0.6px">8.090</span><span class="c" style="left:365.3px;width:37.3px;top:0.6px">34,4</span><span class="c" style="left:411.6px;width:68.9px;top:0.6px">24,45</span><span class="c" style="left:489.5px;width:38.3px;top:0.6px">100</span><span class="c" style="left:536.8px;width:34.6px;top:0.6px">100</span><span class="c" style="left:580.4px;width:68.3px;top:0.6px">4.340</span><span class="c" style="left:657.6999999999999px;width:37.3px;top:0.6px">38,9</span><span class="c" style="left:703.9999999999999px;width:68.9px;top:0.6px">13,58</span><span class="c" style="left:781.8999999999999px;width:38.3px;top:0.6px">56</span><span class="c" style="left:829.1999999999998px;width:34.6px;top:0.6px">113</span><span class="c" style="left:872.8px;width:68.3px;top:0.6px">3.750</span><span class="c" style="left:950.0999999999999px;width:37.3px;top:0.6px">30,1</span><span class="c" style="left:996.3999999999999px;width:68.9px;top:0.6px">10,87</span><span class="c" style="left:1074.3px;width:38.3px;top:0.6px">44</span><span class="c" style="left:1121.6px;width:34.6px;top:0.6px">88</span></div>
<div class="hl" style="left:36px;top:630.84px;width:1129.3px"></div>
<div class="row" style="top:631.34px;height:16.27px;line-height:16.27px"><span class="lab" style="left:40.3px;top:1.6px">Verheiratet, zusammenlebend</span><span class="c" style="left:288px;width:68.3px;top:0.6px">10.790</span><span class="c" style="left:365.3px;width:37.3px;top:0.6px">47,9</span><span class="c" style="left:411.6px;width:68.9px;top:0.6px">33,97</span><span class="c" style="left:489.5px;width:38.3px;top:0.6px">100</span><span class="c" style="left:536.8px;width:34.6px;top:0.6px">100</span><span class="c" style="left:580.4px;width:68.3px;top:0.6px">5.423</span><span class="c" style="left:657.6999999999999px;width:37.3px;top:0.6px">48,9</span><span class="c" style="left:703.9999999999999px;width:68.9px;top:0.6px">17,10</span><span class="c" style="left:781.8999999999999px;width:38.3px;top:0.6px">50</span><span class="c" style="left:829.1999999999998px;width:34.6px;top:0.6px">102</span><span class="c" style="left:872.8px;width:68.3px;top:0.6px">5.367</span><span class="c" style="left:950.0999999999999px;width:37.3px;top:0.6px">46,8</span><span class="c" style="left:996.3999999999999px;width:68.9px;top:0.6px">16,88</span><span class="c" style="left:1074.3px;width:38.3px;top:0.6px">50</span><span class="c" style="left:1121.6px;width:34.6px;top:0.6px">98</span></div>
<div class="hl" style="left:36px;top:647.11px;width:1129.3px"></div>
<div class="row" style="top:647.61px;height:16.27px;line-height:16.27px"><span class="lab" style="left:40.3px;top:1.6px">Verheiratet, getrennt lebend</span><span class="c" style="left:288px;width:68.3px;top:0.6px">366</span><span class="c" style="left:365.3px;width:37.3px;top:0.6px">2,3</span><span class="c" style="left:411.6px;width:68.9px;top:0.6px">1,63</span><span class="c" style="left:489.5px;width:38.3px;top:0.6px">100</span><span class="c" style="left:536.8px;width:34.6px;top:0.6px">100</span><span class="c" style="left:580.4px;width:68.3px;top:0.6px">153</span><span class="c" style="left:657.6999999999999px;width:37.3px;top:0.6px">2,1</span><span class="c" style="left:703.9999999999999px;width:68.9px;top:0.6px">0,73</span><span class="c" style="left:781.8999999999999px;width:38.3px;top:0.6px">45</span><span class="c" style="left:829.1999999999998px;width:34.6px;top:0.6px">91</span><span class="c" style="left:872.8px;width:68.3px;top:0.6px">213</span><span class="c" style="left:950.0999999999999px;width:37.3px;top:0.6px">2,5</span><span class="c" style="left:996.3999999999999px;width:68.9px;top:0.6px">0,89</span><span class="c" style="left:1074.3px;width:38.3px;top:0.6px">55</span><span class="c" style="left:1121.6px;width:34.6px;top:0.6px">108</span></div>
<div class="hl" style="left:36px;top:663.38px;width:1129.3px"></div>
<div class="row" style="top:663.88px;height:16.27px;line-height:16.27px"><span class="lab" style="left:40.3px;top:1.6px">Geschieden</span><span class="c" style="left:288px;width:68.3px;top:0.6px">2.218</span><span class="c" style="left:365.3px;width:37.3px;top:0.6px">8,1</span><span class="c" style="left:411.6px;width:68.9px;top:0.6px">5,76</span><span class="c" style="left:489.5px;width:38.3px;top:0.6px">100</span><span class="c" style="left:536.8px;width:34.6px;top:0.6px">100</span><span class="c" style="left:580.4px;width:68.3px;top:0.6px">967</span><span class="c" style="left:657.6999999999999px;width:37.3px;top:0.6px">6,9</span><span class="c" style="left:703.9999999999999px;width:68.9px;top:0.6px">2,41</span><span class="c" style="left:781.8999999999999px;width:38.3px;top:0.6px">42</span><span class="c" style="left:829.1999999999998px;width:34.6px;top:0.6px">85</span><span class="c" style="left:872.8px;width:68.3px;top:0.6px">1.251</span><span class="c" style="left:950.0999999999999px;width:37.3px;top:0.6px">9,3</span><span class="c" style="left:996.3999999999999px;width:68.9px;top:0.6px">3,35</span><span class="c" style="left:1074.3px;width:38.3px;top:0.6px">58</span><span class="c" style="left:1121.6px;width:34.6px;top:0.6px">115</span></div>
<div class="hl" style="left:36px;top:679.65px;width:1129.3px"></div>
<div class="abs" style="left:32px;top:281.27px;width:4px;height:81.63px;background:#efefef"></div>
<div class="abs" style="left:32px;top:362.90px;width:4px;height:50.84px;background:#9bbcc3"></div>
<div class="abs" style="left:32px;top:413.74px;width:4px;height:50.84px;background:#9bbcc3"></div>
<div class="abs" style="left:32px;top:464.58px;width:4px;height:132.19px;background:#9bbcc3"></div>
<div class="abs" style="left:32px;top:596.77px;width:4px;height:83.23px;background:#9bbcc3"></div>
<div class="vl" style="left:287.5px;top:265px;height:415px;background:#dddddd"></div>
<div class="vl" style="left:364.8px;top:265px;height:415px;background:#eeeeee"></div>
<div class="vl" style="left:411.1px;top:265px;height:415px;background:#eeeeee"></div>
<div class="vl" style="left:489.0px;top:265px;height:415px;background:#eeeeee"></div>
<div class="vl" style="left:536.3px;top:265px;height:415px;background:#eeeeee"></div>
<div class="vl" style="left:579.9px;top:265px;height:415px;background:#dddddd"></div>
<div class="vl" style="left:657.1999999999999px;top:265px;height:415px;background:#eeeeee"></div>
<div class="vl" style="left:703.4999999999999px;top:265px;height:415px;background:#eeeeee"></div>
<div class="vl" style="left:781.3999999999999px;top:265px;height:415px;background:#eeeeee"></div>
<div class="vl" style="left:828.6999999999998px;top:265px;height:415px;background:#eeeeee"></div>
<div class="vl" style="left:872.3px;top:265px;height:415px;background:#dddddd"></div>
<div class="vl" style="left:949.5999999999999px;top:265px;height:415px;background:#eeeeee"></div>
<div class="vl" style="left:995.8999999999999px;top:265px;height:415px;background:#eeeeee"></div>
<div class="vl" style="left:1073.8px;top:265px;height:415px;background:#eeeeee"></div>
<div class="vl" style="left:1121.1px;top:265px;height:415px;background:#eeeeee"></div>
<div class="vl" style="left:1164.8px;top:265px;height:415px;background:#e2e2e2"></div>
<div class="vl" style="left:31.5px;top:265px;height:98px;background:#e6e6e6"></div>
<div class="abs" style="left:580px;top:264.4px;width:589px;height:6px;background:rgba(255,255,255,.72)"></div>
<div class="abs" style="left:575.1px;top:161px;width:598.1px;height:113px;box-sizing:border-box;border:4.2px solid #c4d72f;border-top-width:3.9px"></div>
<svg class="abs" style="left:1208px;top:267px" width="14" height="413" viewBox="0 0 14 413"><path d="M2,10.3 L6.4,2 L10.8,10.3 Z" fill="#111"/><rect x="1.6" y="13.2" width="9.4" height="20.5" rx="4.5" fill="#b5b5b5"/><path d="M1.8,396.3 L11,396.3 L6.4,405 Z" fill="#111"/></svg>
<div class="abs" style="left:0;top:676.4px;width:1224px;height:4px;background:linear-gradient(#d2d2d2 0,#e9e9e9 1.2px,#f3f3f3 2.5px)"></div>
</div></body></html>
